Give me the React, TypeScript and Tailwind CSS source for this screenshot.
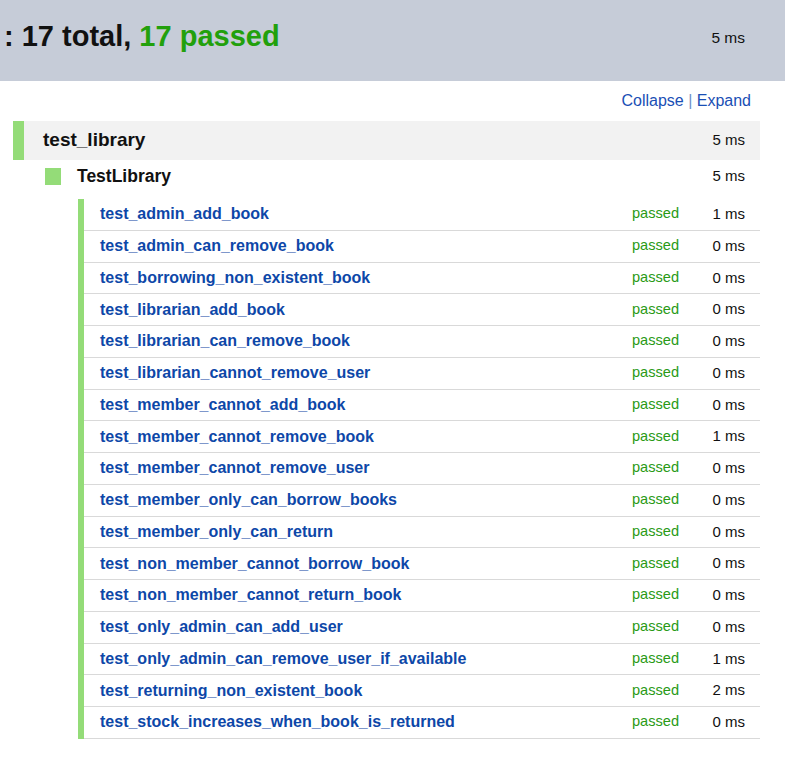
const tests: [string, number][] = [
  ["test_admin_add_book", 1],
  ["test_admin_can_remove_book", 0],
  ["test_borrowing_non_existent_book", 0],
  ["test_librarian_add_book", 0],
  ["test_librarian_can_remove_book", 0],
  ["test_librarian_cannot_remove_user", 0],
  ["test_member_cannot_add_book", 0],
  ["test_member_cannot_remove_book", 1],
  ["test_member_cannot_remove_user", 0],
  ["test_member_only_can_borrow_books", 0],
  ["test_member_only_can_return", 0],
  ["test_non_member_cannot_borrow_book", 0],
  ["test_non_member_cannot_return_book", 0],
  ["test_only_admin_can_add_user", 0],
  ["test_only_admin_can_remove_user_if_available", 1],
  ["test_returning_non_existent_book", 2],
  ["test_stock_increases_when_book_is_returned", 0],
];

export default function App() {
  return (
    <div className="w-[785px] h-[770px] bg-white overflow-hidden font-['Liberation_Sans',Arial,sans-serif] text-[#111]">
      <div className="h-[81px] bg-[#c6ccd8] flex items-center justify-between pl-[4px] pr-[40px]">
        <h1 className="text-[29px] font-bold -mt-[8px]">
          : 17 total, <span className="text-[#22a00c]">17 passed</span>
        </h1>
        <span className="text-[15.5px] -mt-[6px]">5 ms</span>
      </div>

      <div className="flex justify-end pr-[34px] pt-[8px] h-[40px] text-[16px] text-[#1a4fb5]">
        <span>
          Collapse <span className="text-[#6d8fc7]">|</span> Expand
        </span>
      </div>

      <div className="ml-[13px] w-[747px]">
        <div className="h-[39px] bg-[#f2f2f2] border-l-[11px] border-[#94dc78] flex items-center justify-between pl-[19px] pr-[15px]">
          <span className="text-[19px] font-bold">test_library</span>
          <span className="text-[15px]">5 ms</span>
        </div>

        <div className="h-[31px] flex items-center justify-between pl-[32px] pr-[15px] mt-[1px]">
          <div className="flex items-center">
            <div className="w-[16px] h-[17px] bg-[#94dc78]" />
            <span className="ml-[16px] text-[17.5px] font-bold">TestLibrary</span>
          </div>
          <span className="text-[15px]">5 ms</span>
        </div>

        <div className="ml-[65px] mt-[7px] border-l-[6px] border-[#94dc78]">
          {tests.map(([name, ms]) => (
            <div
              key={name}
              className="h-[31.75px] flex items-center border-b border-[#d9d9d9] pl-[16px] pr-[15px]"
            >
              <span className="flex-1 text-[16px] font-bold text-[#0d47a8]">{name}</span>
              <span className="text-[14.6px] text-[#2a9a16] text-right">passed</span>
              <span className="w-[66px] text-right text-[15px]">{ms} ms</span>
            </div>
          ))}
        </div>
      </div>
    </div>
  );
}
